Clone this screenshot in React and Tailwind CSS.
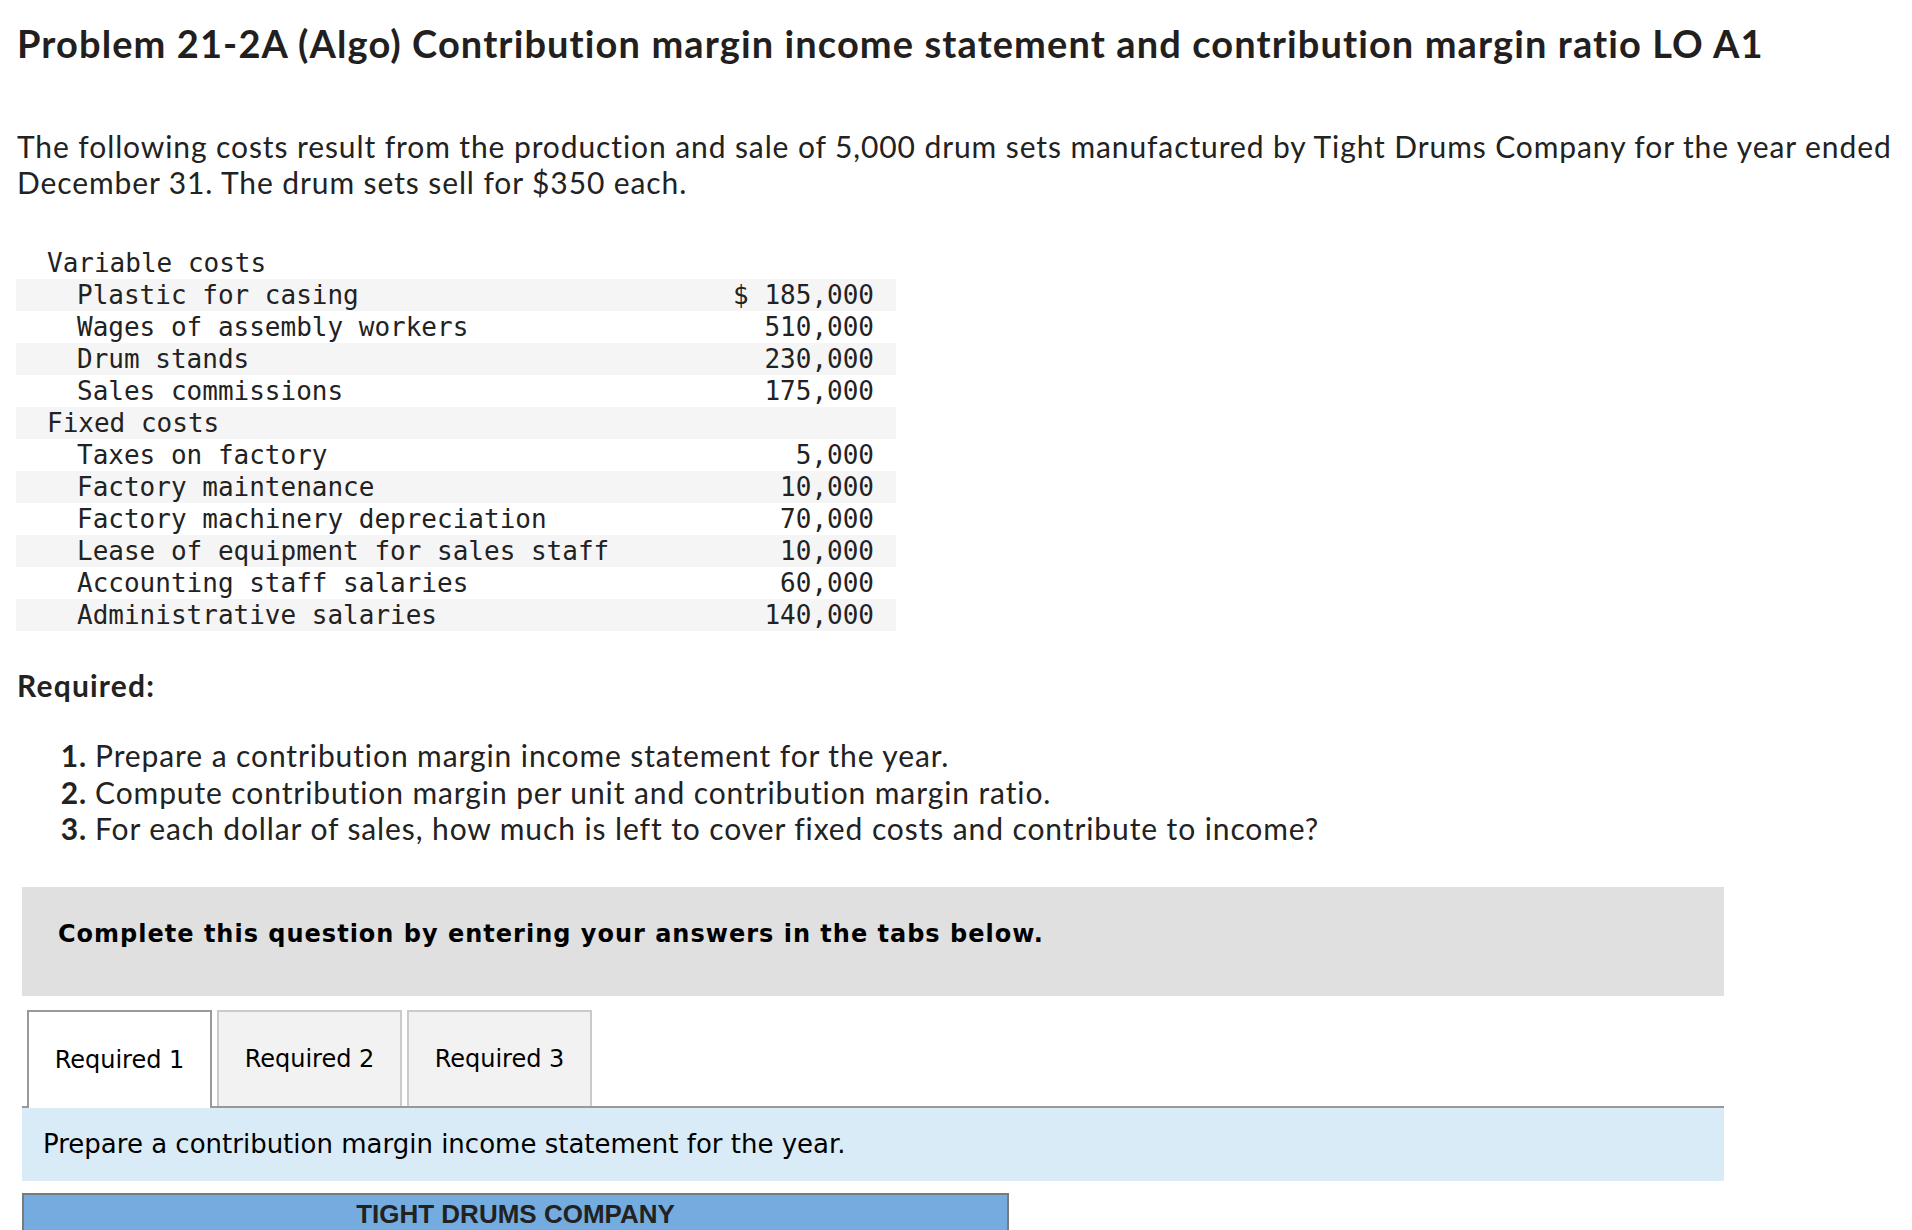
import React from 'react';

const costs = [
    { label: 'Variable costs', level: 0, amount: '' },
    { label: 'Plastic for casing', level: 1, amount: '$ 185,000' },
    { label: 'Wages of assembly workers', level: 1, amount: '510,000' },
    { label: 'Drum stands', level: 1, amount: '230,000' },
    { label: 'Sales commissions', level: 1, amount: '175,000' },
    { label: 'Fixed costs', level: 0, amount: '' },
    { label: 'Taxes on factory', level: 1, amount: '5,000' },
    { label: 'Factory maintenance', level: 1, amount: '10,000' },
    { label: 'Factory machinery depreciation', level: 1, amount: '70,000' },
    { label: 'Lease of equipment for sales staff', level: 1, amount: '10,000' },
    { label: 'Accounting staff salaries', level: 1, amount: '60,000' },
    { label: 'Administrative salaries', level: 1, amount: '140,000' },
];

const steps = [
    'Prepare a contribution margin income statement for the year.',
    'Compute contribution margin per unit and contribution margin ratio.',
    'For each dollar of sales, how much is left to cover fixed costs and contribute to income?',
];

const tabs = ['Required 1', 'Required 2', 'Required 3'];

const CostTable = () => (
    <div className="w-[880px] ml-[-1px] mt-[47px] font-['DejaVu_Sans_Mono',monospace] text-[26px] text-[#222]">
        {costs.map((row, i) => (
            <div
                key={row.label}
                className={`flex justify-between h-[32px] leading-[32px] pr-[22px] ${i % 2 === 1 ? 'bg-[#f5f5f5]' : ''} ${row.level === 0 ? 'pl-[31px]' : 'pl-[61px]'}`}
            >
                <span>{row.label}</span>
                <span className="whitespace-pre">{row.amount}</span>
            </div>
        ))}
    </div>
);

const App = () => {
    return (
        <div className="min-h-screen bg-white pl-[17px] pr-[17px] text-[#222] font-['Lato',sans-serif]">
            <h1 className="pt-[21px] text-[38px] leading-[44px] font-bold tracking-[1.1px] text-[#231f20]">
                Problem 21-2A (Algo) Contribution margin income statement and contribution margin ratio LO A1
            </h1>

            <p className="mt-[63px] text-[30px] leading-[36px] tracking-[0.9px] whitespace-nowrap">
                The following costs result from the production and sale of 5,000 drum sets manufactured by Tight Drums Company for the year ended
                <br />
                December 31. The drum sets sell for $350 each.
            </p>

            <CostTable />

            <h2 className="mt-[36px] text-[30px] leading-[36px] font-bold tracking-[1.2px]">Required:</h2>

            <div className="mt-[34px] text-[30px] leading-[36.5px] tracking-[0.9px]">
                {steps.map((s, i) => (
                    <div key={i} className="flex">
                        <span className="w-[70px] text-right font-bold">{i + 1}.</span>
                        <span className="ml-[8px]">{s}</span>
                    </div>
                ))}
            </div>

            <div className="ml-[5px] mt-[40px] w-[1702px] font-['DejaVu_Sans',sans-serif] text-black">
                <div className="h-[109px] bg-[#e0e0e0] pl-[36px] pt-[32px]">
                    <p className="text-[24px] leading-[30px] font-bold tracking-[1px]">
                        Complete this question by entering your answers in the tabs below.
                    </p>
                </div>

                <div className="mt-[14px] flex items-end border-b-2 border-[#999] pl-[5px] gap-[5px]">
                    {tabs.map((t, i) => (
                        <div
                            key={t}
                            className={`w-[185px] flex items-center justify-center text-[24px] ${i === 0 ? 'bg-white border-2 border-b-0 border-[#999] mb-[-2px] h-[98px]' : 'h-[96px] bg-[#f2f2f2] border-2 border-b-0 border-[#cacaca]'}`}
                        >
                            {t}
                        </div>
                    ))}
                </div>

                <div className="h-[73px] bg-[#d9ebf6] pl-[21px] flex items-center">
                    <p className="text-[26px]">Prepare a contribution margin income statement for the year.</p>
                </div>

                <div className="mt-[12px] w-[987px] h-[40px] bg-[#74acdf] border-2 border-b-0 border-[#7a7a7a] pt-[4px] text-center">
                    <p className="font-['Liberation_Sans',Arial,sans-serif] font-bold text-[26px] leading-[30px] text-[#222]">
                        TIGHT DRUMS COMPANY
                    </p>
                </div>
            </div>
        </div>
    );
};

export default App;
